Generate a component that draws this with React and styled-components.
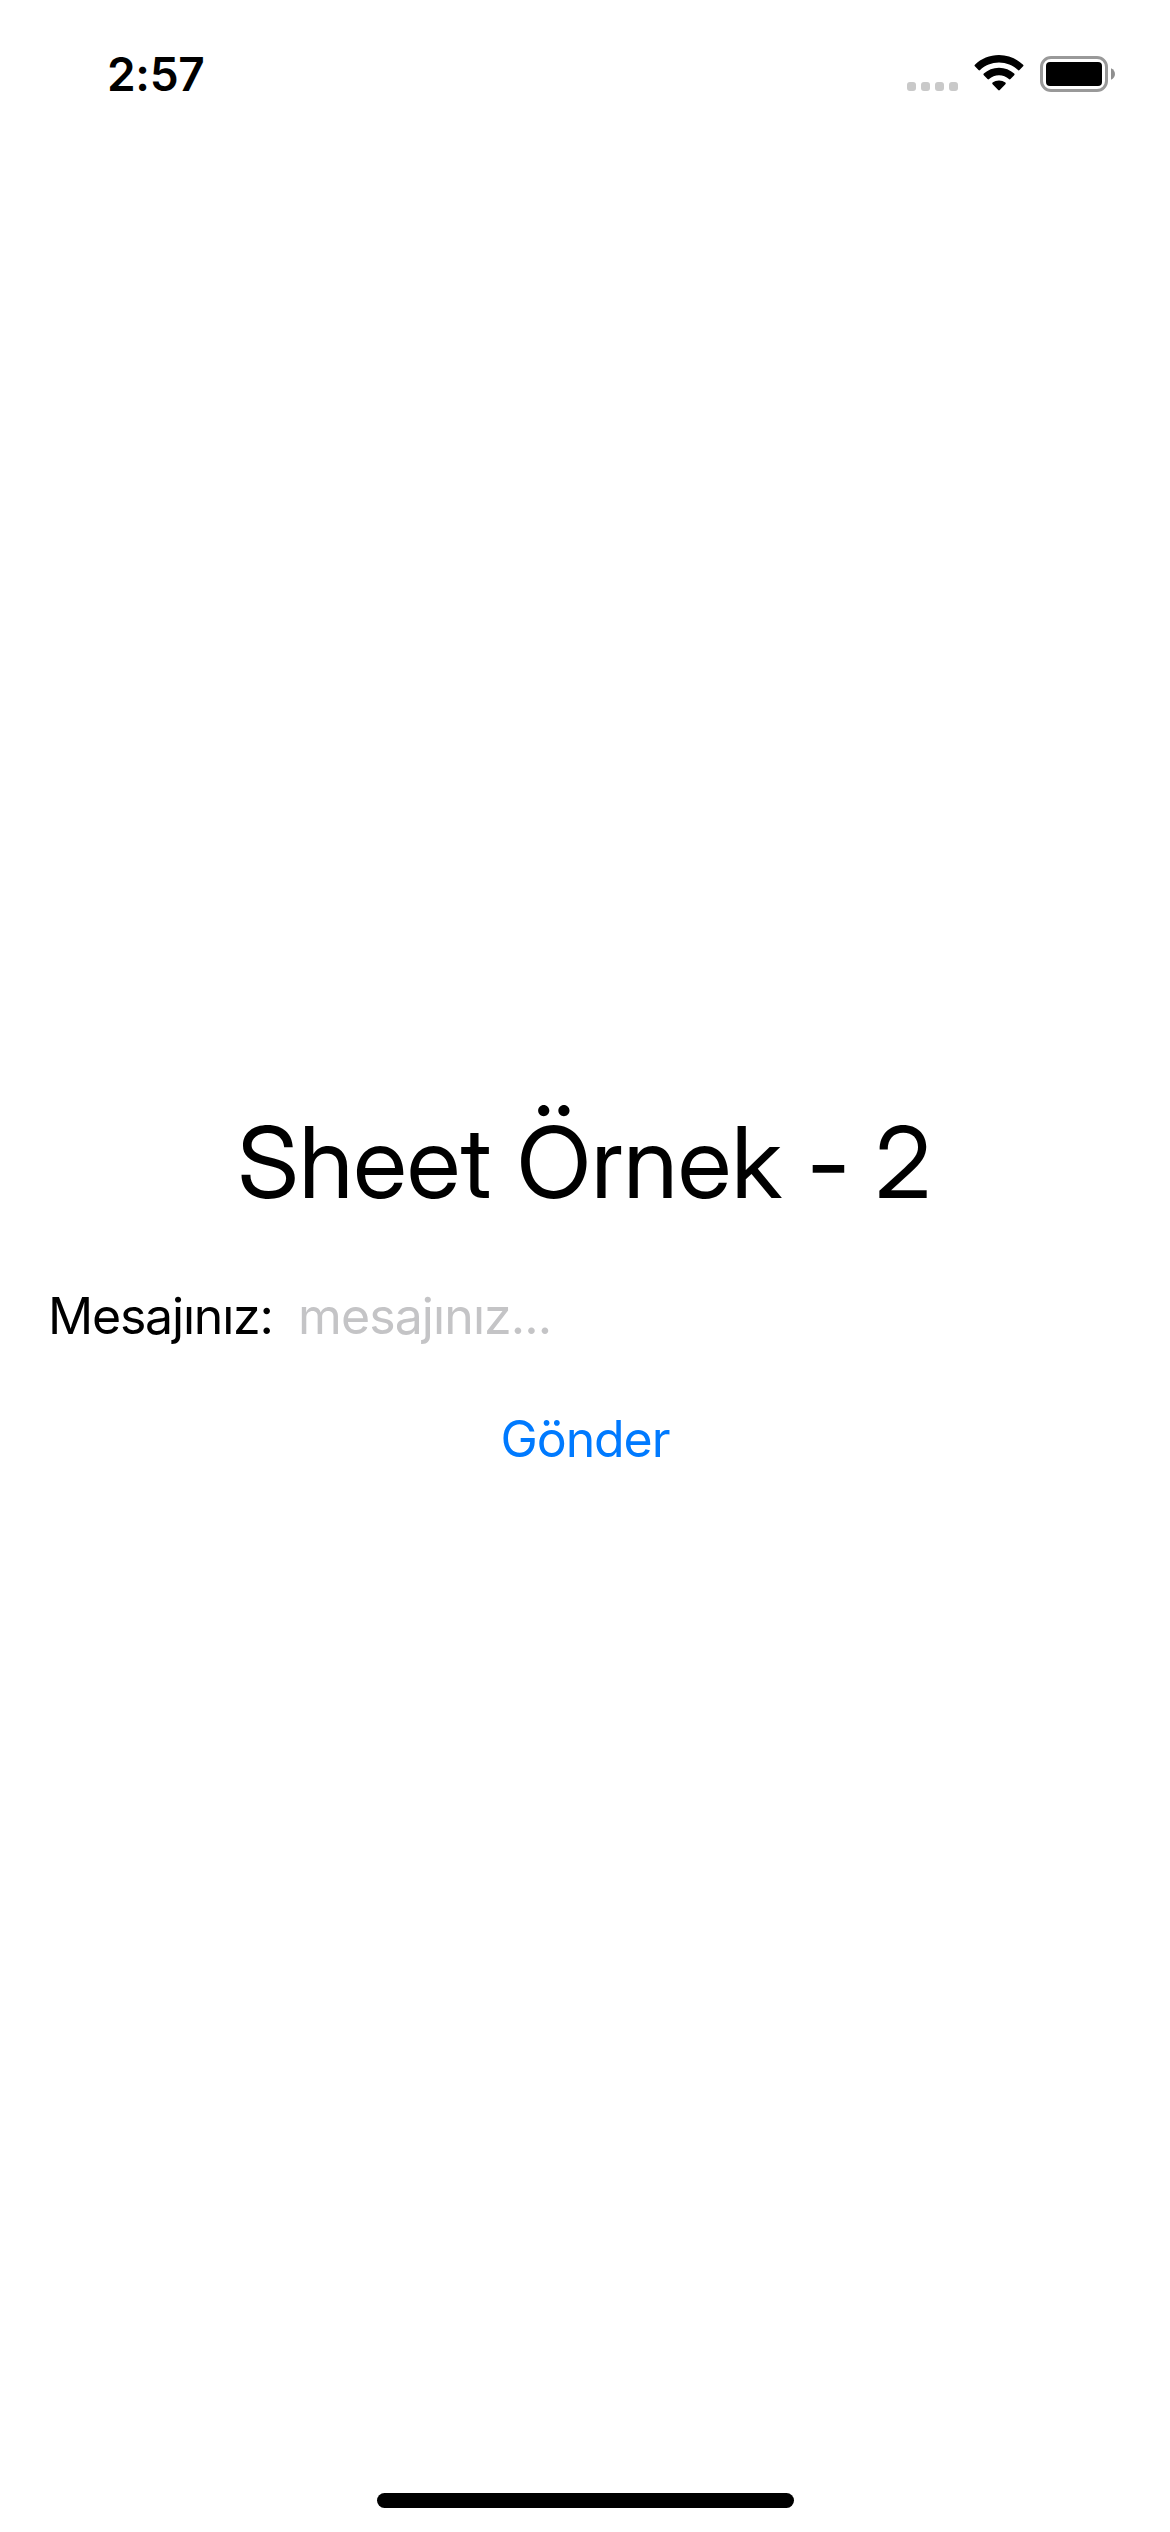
import React from "react";
import styled, { createGlobalStyle } from "styled-components";

const GlobalStyle = createGlobalStyle`
  *, *::before, *::after { box-sizing: border-box; }
  html, body { margin: 0; background: #fff; }
  body { font-family: Inter, "Liberation Sans", sans-serif; color: #000; }
`;

const Screen = styled.div`
  width: 1170px;
  height: 2532px;
  display: flex;
  flex-direction: column;
  background: #fff;
  overflow: hidden;
`;

const StatusBar = styled.header`
  height: 141px;
  flex: none;
  display: flex;
  justify-content: space-between;
  align-items: flex-start;
  padding: 46px 55px 0 107px;
`;

const Time = styled.time`
  font-size: 46px;
  line-height: 56px;
  font-weight: 600;
  letter-spacing: -0.3px;
`;

const Indicators = styled.div`
  display: flex;
  align-items: flex-start;
  padding-top: 9px;
`;

const SignalDots = styled.div`
  display: flex;
  gap: 5px;
  margin: 27px 16px 0 0;
`;

const Dot = styled.span`
  width: 9px;
  height: 9px;
  border-radius: 3px;
  background: #c9c9c9;
`;

const WifiIcon = styled.svg`
  width: 50px;
  height: 37px;
  margin-right: 16px;
`;

const BatteryIcon = styled.svg`
  width: 75px;
  height: 37px;
  margin-top: 1px;
`;

const Content = styled.main`
  flex: 1;
  display: flex;
  flex-direction: column;
  padding: 961px 48px 0;
`;

const Title = styled.h1`
  margin: 0;
  padding-right: 1px;
  text-align: center;
  font-family: "Inter Display", Inter, "Liberation Sans", sans-serif;
  font-variation-settings: "opsz" 32;
  font-size: 99px;
  line-height: 120px;
  font-weight: 400;
  letter-spacing: 0.4px;
`;

const MessageRow = styled.label`
  display: flex;
  gap: 24px;
  margin-top: 64px;
  font-size: 50px;
  line-height: 61px;
`;

const MessageLabel = styled.span`
  width: 226px;
  white-space: nowrap;
  letter-spacing: -1.2px;
`;

const MessageInput = styled.input`
  flex: 1;
  min-width: 0;
  height: 61px;
  padding: 0;
  border: 0;
  outline: 0;
  background: none;
  font: inherit;
  letter-spacing: -0.9px;
  &::placeholder { color: #c4c4c6; opacity: 1; }
`;

const SendButton = styled.button`
  align-self: center;
  margin-top: 62px;
  padding: 0;
  border: 0;
  background: none;
  color: #007aff;
  font: inherit;
  font-size: 50px;
  line-height: 61px;
  letter-spacing: -1.1px;
`;

const HomeIndicator = styled.div`
  flex: none;
  align-self: center;
  width: 417px;
  height: 15px;
  margin-bottom: 24px;
  border-radius: 8px;
  background: #000;
`;

export default function App() {
  return (
    <Screen>
      <GlobalStyle />
      <StatusBar>
        <Time>2:57</Time>
        <Indicators>
          <SignalDots>
            <Dot /><Dot /><Dot /><Dot />
          </SignalDots>
          <WifiIcon viewBox="0 0 50 37">
            <path d="M25 0C34.3 0 42.7 3.6 49.1 9.7Q49.9 10.5 49.1 11.3L45.5 15Q44.7 15.8 43.9 15C38.9 10.3 32.3 7.5 25 7.5S11.1 10.3 6.1 15Q5.3 15.8 4.5 15L.9 11.3Q.1 10.5.9 9.7C7.3 3.6 15.7 0 25 0Z" />
            <path d="M25 12.7C30.9 12.7 36.2 15 40.2 18.6Q41.1 19.4 40.2 20.3L36.5 24Q35.7 24.8 34.9 24C32.3 21.6 28.8 20.2 25 20.2S17.7 21.6 15.1 24Q14.3 24.8 13.5 24L9.8 20.3Q8.9 19.4 9.8 18.6C13.8 15 19.1 12.7 25 12.7Z" />
            <path d="M25 25.4C27.4 25.4 29.6 26.2 31.4 27.6Q32.3 28.4 31.4 29.3L25.8 35Q25 35.8 24.2 35L18.6 29.3Q17.7 28.4 18.6 27.6C20.4 26.2 22.6 25.4 25 25.4Z" />
          </WifiIcon>
          <BatteryIcon viewBox="0 0 75 37">
            <rect x="1.5" y="1.5" width="65" height="33" rx="9.5" fill="none" stroke="#999" strokeWidth="3" />
            <rect x="6" y="6" width="56" height="24" rx="4" />
            <path d="M71 12.2C76.3 14.5 76.3 21.5 71 23.8Z" fill="#8f8f8f" />
          </BatteryIcon>
        </Indicators>
      </StatusBar>
      <Content>
        <Title>Sheet Örnek - 2</Title>
        <MessageRow>
          <MessageLabel>Mesajınız:</MessageLabel>
          <MessageInput placeholder="mesajınız..." />
        </MessageRow>
        <SendButton type="button">Gönder</SendButton>
      </Content>
      <HomeIndicator />
    </Screen>
  );
}
